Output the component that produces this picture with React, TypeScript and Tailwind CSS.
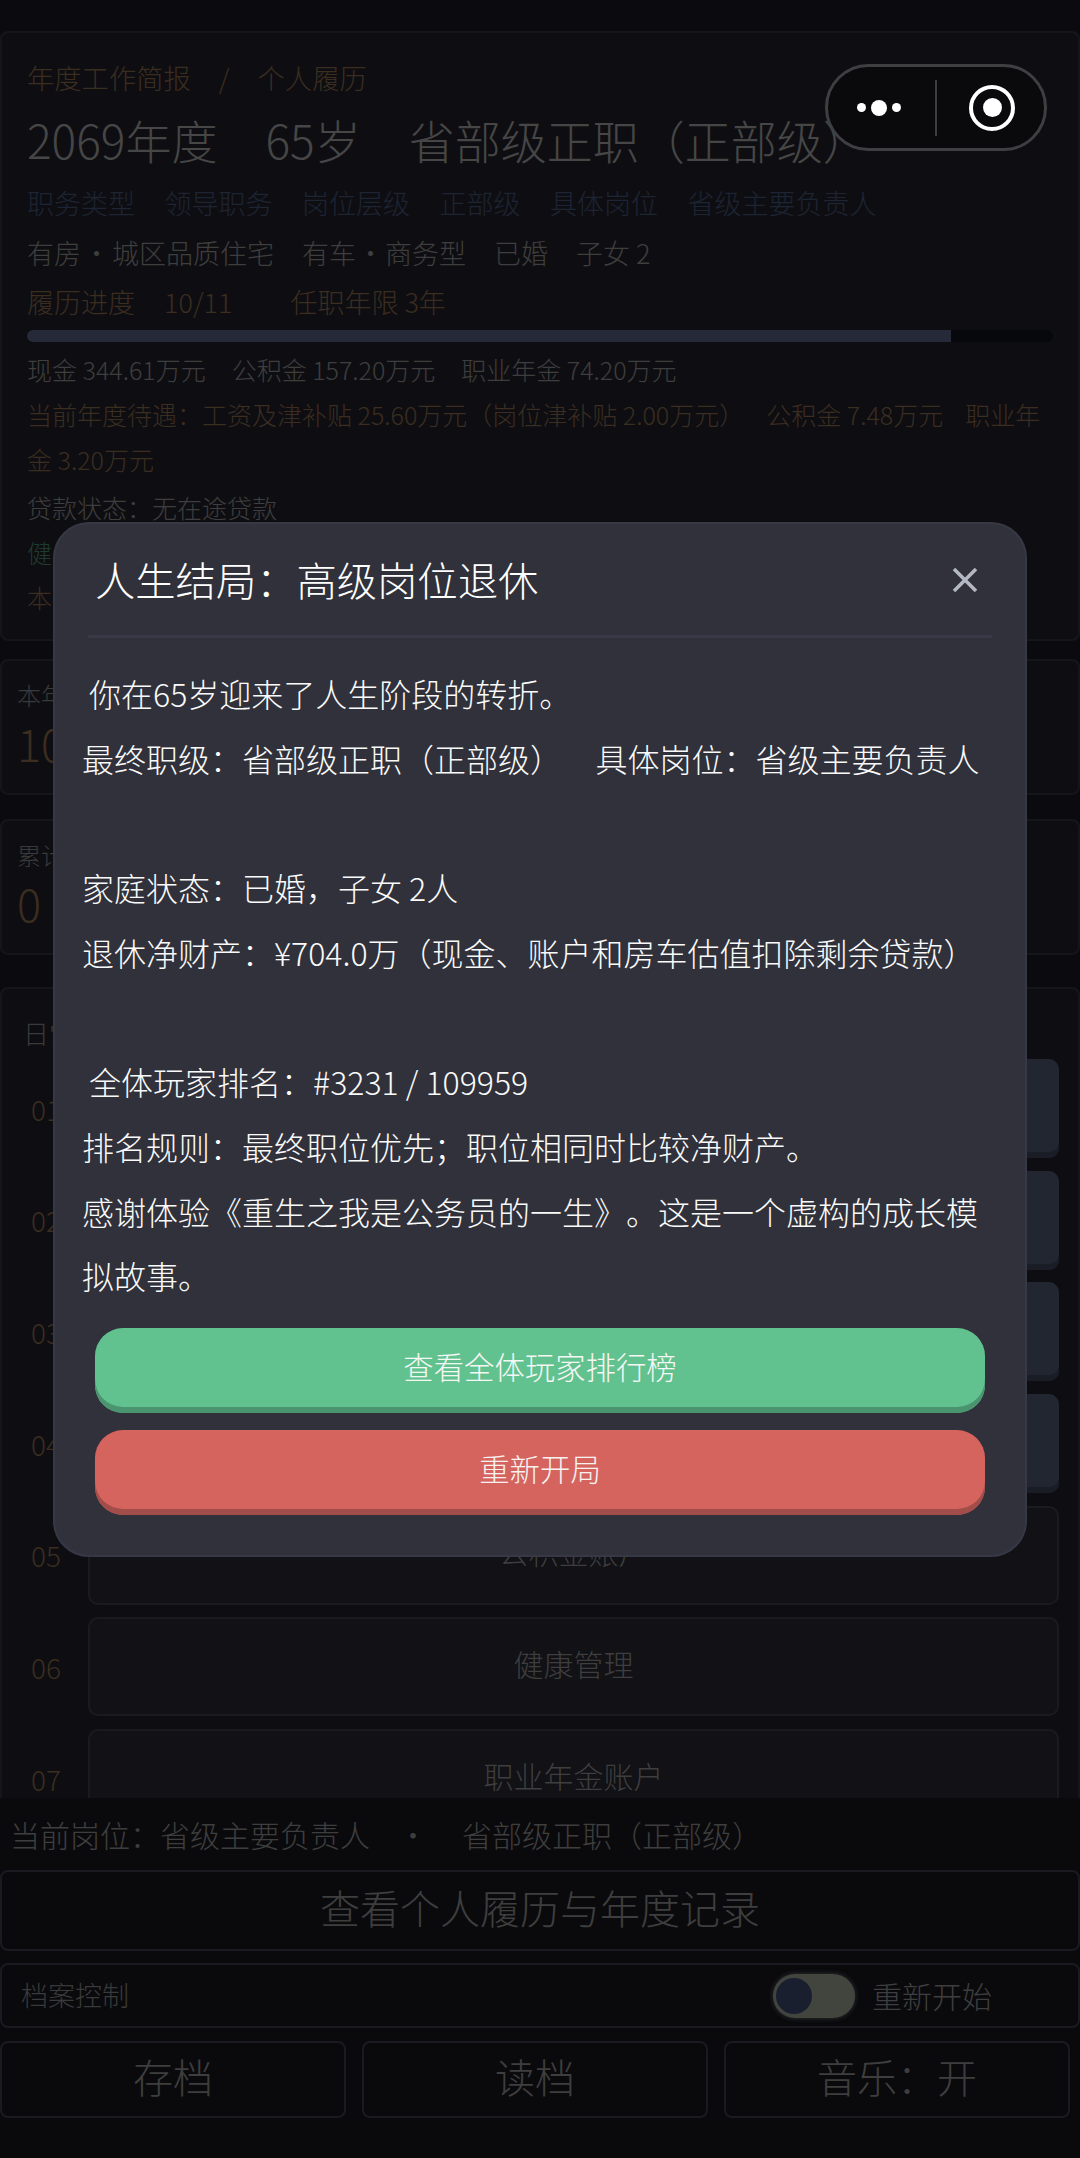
const rows = [
  { no: '01', label: '', lit: true },
  { no: '02', label: '', lit: true },
  { no: '03', label: '', lit: true },
  { no: '04', label: '', lit: true },
  { no: '05', label: '公积金账户', lit: false },
  { no: '06', label: '健康管理', lit: false },
  { no: '07', label: '职业年金账户', lit: false },
];

const body = ` 你在65岁迎来了人生阶段的转折。
最终职级：省部级正职（正部级）    \u2006具体岗位：省级主要负责人

家庭状态：已婚，子女 2人
退休净财产：¥704.0万（现金、账户和房车估值扣除剩余贷款）

 全体玩家排名：#3231 / 109959
排名规则：最终职位优先；职位相同时比较净财产。
感谢体验《重生之我是公务员的一生》。这是一个虚构的成长模拟故事。`;

export default function App() {
  return (
    <div className="relative h-[2158px] w-[1080px] overflow-hidden bg-[#0a0a0d] font-['Noto_Sans_CJK_SC','Noto_Sans',sans-serif] font-light [font-feature-settings:'chws'_0] [text-spacing-trim:space-all]">
      <div className="flex h-[1798px] flex-col overflow-hidden bg-[#0b0b0f] pt-[31px]">
        {/* Resume card */}
        <section className="h-[610px] shrink-0 rounded-lg border-2 border-[#15161b] bg-[#0e0e12] px-[25px] pt-[23px]">
          <div className="flex h-[42px] items-center text-[27.3px] text-[#3b2d20]">
            <span>年度工作简报</span>
            <span className="mx-[28px]">/</span>
            <span>个人履历</span>
          </div>
          <div className="mt-[9px] flex h-[64px] items-center gap-[48px] whitespace-nowrap text-[46px] text-[#464646]">
            <span>2069年度</span>
            <span>65岁</span>
            <span>省部级正职（正部级）</span>
          </div>
          <div className="mt-[8px] flex h-[49px] items-center gap-[29.5px] text-[27px] text-[#1d2433]">
            <span>职务类型</span>
            <span>领导职务</span>
            <span>岗位层级</span>
            <span>正部级</span>
            <span>具体岗位</span>
            <span>省级主要负责人</span>
          </div>
          <div className="flex h-[50px] items-center gap-[28px] text-[27px] text-[#3e3e3e]">
            <span>
              有房<span className="mx-[2px]">·</span>城区品质住宅
            </span>
            <span>
              有车<span className="mx-[1px]">·</span>商务型
            </span>
            <span>已婚</span>
            <span>子女 2</span>
          </div>
          <div className="flex h-[48px] items-center text-[27px] text-[#3b2d20]">
            <span>履历进度</span>
            <span className="ml-[29px]">10/11</span>
            <span className="ml-[58px]">任职年限 3年</span>
          </div>
          <div className="mt-[4px] h-[12px] w-[1026px] overflow-hidden rounded-full bg-[#06080b]">
            <div className="h-full w-[924px] bg-[#262a38]" />
          </div>
          <div className="mt-[5px] flex h-[45px] items-center gap-[26px] text-[25px] text-[#3e3e3e]">
            <span>现金 344.61万元</span>
            <span>公积金 157.20万元</span>
            <span>职业年金 74.20万元</span>
          </div>
          <p className="text-[25px] leading-[45px] text-[#3b2d20]">
            当前年度待遇：工资及津补贴 25.60万元（岗位津补贴 2.00万元） &nbsp;&nbsp; 公积金 7.48万元 &nbsp;&nbsp; 职业年金 3.20万元
          </p>
          <div className="mt-[3px] text-[25px] leading-[45px] text-[#3e3e3e]">贷款状态：无在途贷款</div>
          <div className="text-[25px] leading-[45px] text-[#1f3a30]">健</div>
          <div className="text-[25px] leading-[45px] text-[#3b2d20]">本</div>
        </section>

        {/* Stat cards */}
        <section className="mt-[18px] h-[136px] shrink-0 rounded-lg border-2 border-[#15161b] bg-[#0e0e12] px-[15px] pt-[16px]">
          <div className="text-[24px] leading-[36px] text-[#3a3a3a]">本年</div>
          <div className="text-[45px] leading-[60px] text-[#3b2d20]">10</div>
        </section>
        <section className="mt-[24px] h-[136px] shrink-0 rounded-lg border-2 border-[#15161b] bg-[#0e0e12] px-[15px] pt-[16px]">
          <div className="text-[24px] leading-[36px] text-[#3a3a3a]">累计</div>
          <div className="text-[45px] leading-[60px] text-[#3b2d20]">0</div>
        </section>

        {/* Actions */}
        <section className="mt-[32px] flex-1 rounded-lg border-2 border-[#15161b] bg-[#0e0e12] pl-[21px] pr-[19px] pt-[24px]">
          <div className="text-[26px] leading-[40px] text-[#3a3a3a]">日常</div>
          <div className="mt-[6px] flex flex-col gap-[12.7px]">
            {rows.map((row) => (
              <div key={row.no} className="flex items-center gap-[25px]">
                <span className="w-[40px] pl-[8px] text-[28px] text-[#3b2d20]">{row.no}</span>
                <div
                  className={
                    row.lit
                      ? 'flex h-[99px] flex-1 items-center justify-center rounded-[10px] bg-[#212631] shadow-[inset_0_-6px_0_#1a1d25]'
                      : 'flex h-[99px] flex-1 items-center justify-center rounded-[10px] border-2 border-[#1a1b21] bg-[#111116] pb-[7px] text-[30px] text-[#3e3e3e]'
                  }
                >
                  {row.label}
                </div>
              </div>
            ))}
          </div>
        </section>
      </div>

      {/* Bottom bar */}
      <footer className="flex h-[360px] flex-col bg-[#0a0a0d]">
        <div className="flex h-[72px] items-center whitespace-pre pl-[10px] text-[30px] text-[#3e3e3e]">
          <span>当前岗位：省级主要负责人</span>
          <span className="ml-[28px] mr-[34px]">·</span>
          <span>省部级正职（正部级）</span>
        </div>
        <button className="h-[81px] w-full rounded-lg border-2 border-[#1a1b21] pb-[8px] text-[40px] font-light text-[#3e3e3e]">
          查看个人履历与年度记录
        </button>
        <div className="mt-[12px] flex h-[65px] items-center rounded-lg border-2 border-[#1a1b21] pl-[19px]">
          <span className="text-[27px] text-[#3a3a3a]">档案控制</span>
          <div className="ml-auto flex h-[44px] w-[82px] items-center rounded-full bg-[#42443e] pl-[3px] shadow-[0_0_4px_1px_#26272a]">
            <div className="h-[36px] w-[36px] rounded-full bg-[#1a1f2f]" />
          </div>
          <span className="ml-[17px] mr-[86px] text-[30px] text-[#3e3e3e]">重新开始</span>
        </div>
        <div className="mt-[13px] flex gap-[16px] pr-[10px]">
          {['存档', '读档', '音乐：开'].map((label) => (
            <button
              key={label}
              className="h-[77px] flex-1 rounded-lg border-2 border-[#1a1b21] pb-[7px] text-[40px] font-light text-[#3e3e3e]"
            >
              {label}
            </button>
          ))}
        </div>
      </footer>

      {/* Mini program capsule */}
      <div className="absolute left-[825px] top-[64px] flex h-[87px] w-[222px] items-center rounded-full border-[3px] border-[#3f3f42] bg-[#0a0a0c]">
        <div className="flex w-[107px] items-center justify-center gap-[5px] pr-[5px]">
          <span className="h-[9px] w-[9px] rounded-full bg-white" />
          <span className="h-[16px] w-[16px] rounded-full bg-white" />
          <span className="h-[9px] w-[9px] rounded-full bg-white" />
        </div>
        <span className="h-[56px] w-[2px] bg-[#3f3f42]" />
        <div className="flex flex-1 items-center justify-center pl-[3px]">
          <div className="flex h-[46px] w-[46px] items-center justify-center rounded-full border-[4px] border-white">
            <span className="h-[19px] w-[19px] rounded-full bg-white" />
          </div>
        </div>
      </div>

      {/* Ending dialog */}
      <div className="absolute left-[53px] top-[522px] h-[1035px] w-[974px] rounded-[36px] border-2 border-[#363945] bg-[#30313a] pl-[27px] pr-[40px]">
        <div className="ml-[6px] mr-[-7px] flex h-[114px] items-center justify-between border-b-[3px] border-[#383b47] pl-[7px] pr-[14px]">
          <h2 className="text-[40.3px] font-light text-white">人生结局：高级岗位退休</h2>
          <svg className="h-[26px] w-[26px]" viewBox="0 0 26 26" fill="none" stroke="#b4b8c4" strokeWidth="3.5">
            <path d="M2 2 24 24M24 2 2 24" />
          </svg>
        </div>
        <div className="mt-[23px] whitespace-pre-wrap text-[32px] leading-[64.7px] text-[#fafafa]">{body}</div>
        <div className="mr-[-13px] mt-[20px] flex flex-col gap-[17px] px-[13px]">
          <button className="h-[85px] rounded-[28px] bg-[#62c28f] pb-[8px] text-[30.4px] font-light text-[#f4f7f4] shadow-[inset_0_-6px_0_#4b9470]">
            查看全体玩家排行榜
          </button>
          <button className="h-[85px] rounded-[28px] bg-[#d5645f] pb-[8px] text-[30.4px] font-light text-[#f7f2f0] shadow-[inset_0_-6px_0_#a24d4a]">
            重新开局
          </button>
        </div>
      </div>
    </div>
  );
}
